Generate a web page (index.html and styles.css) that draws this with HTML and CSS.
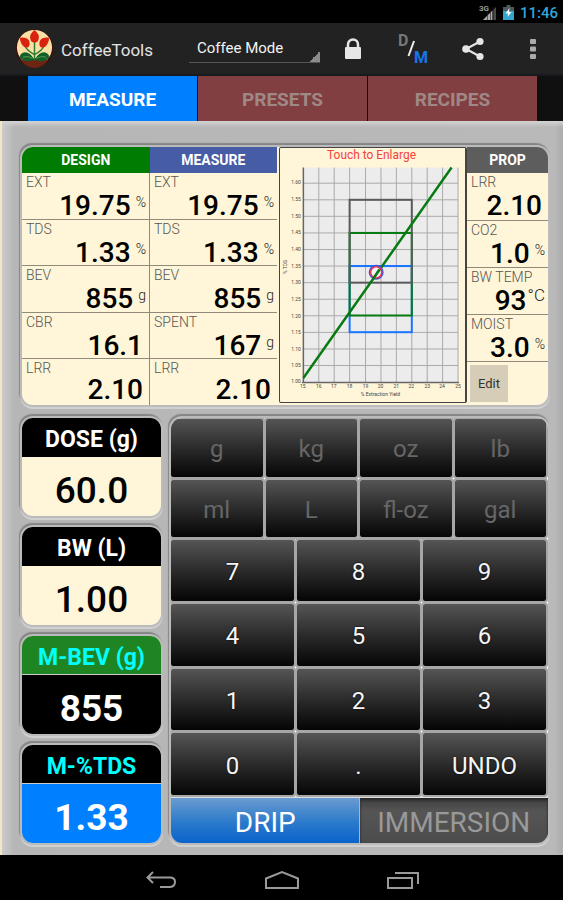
FILE: index.html
```html
<!DOCTYPE html>
<html lang="en">
<head>
<meta charset="utf-8">
<meta name="viewport" content="width=device-width, initial-scale=1">
<title>CoffeeTools</title>
<link rel="stylesheet" href="styles.css">
</head>
<body>
<div class="app">
  <div class="status">
    <svg width="18" height="17" viewBox="0 0 18 17" aria-hidden="true">
      <path d="M4 16L17 3V16Z" fill="#4a4a4a"/>
      <path d="M4 16L13 7V16Z" fill="#aaa"/>
      <path d="M8.500 5V16M11.500 5V16M14.500 3V16" stroke="#222" stroke-width="0.600"/>
      <text class="net" x="0" y="7">3G</text>
    </svg>
    <svg width="11" height="15" viewBox="0 0 11 15" aria-hidden="true">
      <path d="M3.500 0h4v2H11v6H0V2h3.500z" fill="#4d5a5e"/>
      <path d="M0 6h11v9H0z" fill="#33a5cf"/>
      <path d="M6.500 3L2.500 8.500H5L4.500 12L8.500 7H6z" fill="#fff"/>
    </svg>
    <span>11:46</span>
  </div>

  <header class="bar">
    <svg class="logo" viewBox="0 0 40 42" aria-hidden="true">
      <circle cx="20" cy="21" r="19.500" fill="#3a120b"/>
      <circle cx="20" cy="20" r="18" fill="#fbe0a6"/>
      <path d="M6 33Q20 29 34 33Q28 41 20 41Q12 41 6 33Z" fill="#6e2413"/>
      <path d="M20 14V33M10 18Q12 23 19.500 27M30 18Q28 23 20.500 27" stroke="#2e7a35" stroke-width="1.500" fill="none"/>
      <path d="M20 2Q25 6 24.500 10Q24 15 20 15Q16 15 15.500 10Q15 6 20 2Z" fill="#d9230f"/>
      <path d="M5 10Q12 9 14.500 13Q16 18 13 20Q9 20.500 7 17Q5 14 5 10Z" fill="#d9230f"/>
      <path d="M35 10Q28 9 25.500 13Q24 18 27 20Q31 20.500 33 17Q35 14 35 10Z" fill="#d9230f"/>
      <path d="M19.500 32Q15 24 9 25Q5 26 5 30Q8 34 13 34Q18 34 19.500 32ZM20.500 32Q25 24 31 25Q35 26 35 30Q32 34 27 34Q22 34 20.500 32Z" fill="#11602a"/>
      <path d="M8 30Q13 28 18 31M32 30Q27 28 22 31" stroke="#58a04f" stroke-width="1" fill="none"/>
    </svg>
    <h1>CoffeeTools</h1>
    <div class="spinner">
      <select aria-label="Mode"><option>Coffee Mode</option><option>Espresso</option></select>
    </div>
    <button class="icon" type="button" aria-label="Lock">
      <svg width="18" height="22" viewBox="0 0 18 22"><path d="M4 10V6.500a5 5 0 0 1 10 0V10" fill="none" stroke="#e6e6e6" stroke-width="2.500"/><rect x="1" y="9" width="16" height="12" rx="1" fill="#e6e6e6"/></svg>
    </button>
    <button class="icon" type="button" aria-label="Design or measure">
      <svg width="32" height="32" viewBox="0 0 32 32"><text class="glyph-d" x="1" y="13">D</text><path d="M11.500 23L17 8" stroke="#eee" stroke-width="2"/><text class="glyph-m" x="17" y="30">M</text></svg>
    </button>
    <button class="icon" type="button" aria-label="Share">
      <svg width="22" height="24" viewBox="0 0 22 24"><path d="M18 4.500L4 12L18 19.500" fill="none" stroke="#e6e6e6" stroke-width="2"/><g fill="#e6e6e6"><circle cx="4" cy="12" r="3.800"/><circle cx="18" cy="4.500" r="3.600"/><circle cx="18" cy="19.500" r="3.600"/></g></svg>
    </button>
    <button class="icon" type="button" aria-label="More options">
      <svg width="6" height="20" viewBox="0 0 6 20" fill="#aaa"><rect width="6" height="5" rx="1"/><rect y="7.500" width="6" height="5" rx="1"/><rect y="15" width="6" height="5" rx="1"/></svg>
    </button>
  </header>

  <nav class="tabs">
    <button class="tab active" type="button">MEASURE</button>
    <button class="tab" type="button">PRESETS</button>
    <button class="tab" type="button">RECIPES</button>
  </nav>

  <main>
    <section class="panel readings">
      <table class="grid">
        <thead><tr><th class="green" scope="col">DESIGN</th><th class="indigo" scope="col">MEASURE</th></tr></thead>
        <tbody>
          <tr><td><p>EXT</p><div class="val"><b>19.75</b><i>%</i></div></td><td><p>EXT</p><div class="val"><b>19.75</b><i>%</i></div></td></tr>
          <tr><td><p>TDS</p><div class="val"><b>1.33</b><i>%</i></div></td><td><p>TDS</p><div class="val"><b>1.33</b><i>%</i></div></td></tr>
          <tr><td><p>BEV</p><div class="val"><b>855</b><i>g</i></div></td><td><p>BEV</p><div class="val"><b>855</b><i>g</i></div></td></tr>
          <tr><td><p>CBR</p><div class="val"><b>16.1</b></div></td><td><p>SPENT</p><div class="val"><b>167</b><i>g</i></div></td></tr>
          <tr><td><p>LRR</p><div class="val"><b>2.10</b></div></td><td><p>LRR</p><div class="val"><b>2.10</b></div></td></tr>
        </tbody>
      </table>

      <button class="chart" type="button" aria-label="Enlarge chart">
        <svg viewBox="280 149 186 254">
          <text class="chart-title" x="372" y="159" text-anchor="middle">Touch to Enlarge</text>
          <rect x="303" y="168" width="156" height="216" fill="#ececec"/>
          <path d="M319 168V384M334.500 168V384M350 168V384M366 168V384M381.500 168V384M397 168V384M412.500 168V384M428 168V384M443.500 168V384M459 168V384M303 183.700H459M303 200.400H459M303 217H459M303 233.700H459M303 250.400H459M303 267H459M303 283.700H459M303 300.400H459M303 317H459M303 333.700H459M303 350.400H459M303 367H459" stroke="#a9a9a9" stroke-width="1"/>
          <path d="M303.500 168V384M302 384H460" stroke="#666" stroke-width="1.500"/>
          <g fill="none" stroke-width="2">
            <rect x="350" y="267" width="62.500" height="66.500" stroke="#1a75ff"/>
            <rect x="350" y="233.700" width="62.500" height="83" stroke="#087a12"/>
            <rect x="350" y="200.400" width="62.500" height="83.300" stroke="#5a5a5e"/>
            <path d="M351 267H411.500" stroke="#1a75ff"/>
            <path d="M351 233.700H411.500" stroke="#087a12"/>
          </g>
          <path d="M303.500 379.500L452.500 168" stroke="#087a12" stroke-width="2.500"/>
          <circle cx="376.700" cy="273.300" r="6.800" fill="none" stroke="#3b59d6" stroke-width="1.500"/>
          <circle cx="376.700" cy="273.300" r="5.600" fill="#fff" fill-opacity="0.500" stroke="#e8305a" stroke-width="1.500"/>
          <path d="M373.500 280L380 270.500" stroke="#087a12" stroke-width="2.500"/>
          <g class="ticks" text-anchor="end">
            <text x="301" y="185">1.60</text><text x="301" y="202">1.55</text><text x="301" y="219">1.50</text><text x="301" y="235">1.45</text><text x="301" y="252">1.40</text><text x="301" y="269">1.35</text><text x="301" y="285">1.30</text><text x="301" y="302">1.25</text><text x="301" y="319">1.20</text><text x="301" y="335">1.15</text><text x="301" y="352">1.10</text><text x="301" y="369">1.05</text><text x="301" y="385">1.00</text>
          </g>
          <g class="ticks" text-anchor="middle">
            <text x="303" y="390">15</text><text x="319" y="390">16</text><text x="334" y="390">17</text><text x="350" y="390">18</text><text x="366" y="390">19</text><text x="381" y="390">20</text><text x="397" y="390">21</text><text x="412" y="390">22</text><text x="428" y="390">23</text><text x="443" y="390">24</text><text x="459" y="390">25</text>
            <text x="381" y="398">% Extraction Yield</text>
            <text transform="translate(287 268) rotate(-90)">% TDS</text>
          </g>
        </svg>
      </button>

      <div class="prop">
        <table class="grid">
          <thead><tr><th class="gray" scope="col">PROP</th></tr></thead>
          <tbody>
            <tr><td><p>LRR</p><div class="val"><b>2.10</b></div></td></tr>
            <tr><td><p>CO2</p><div class="val"><b>1.0</b><i>%</i></div></td></tr>
            <tr><td><p>BW TEMP</p><div class="val"><b>93</b><i class="big">°C</i></div></td></tr>
            <tr><td><p>MOIST</p><div class="val"><b>3.0</b><i>%</i></div></td></tr>
          </tbody>
        </table>
        <button class="edit" type="button">Edit</button>
      </div>
    </section>

    <div class="lower">
      <div class="cards">
        <button class="panel card dose" type="button"><span>DOSE (g)</span><strong>60.0</strong></button>
        <button class="panel card dose" type="button"><span>BW (L)</span><strong>1.00</strong></button>
        <button class="panel card bev" type="button"><span>M-BEV (g)</span><strong>855</strong></button>
        <button class="panel card tds" type="button"><span>M-%TDS</span><strong>1.33</strong></button>
      </div>
      <div class="panel pad">
        <div class="keys">
          <button class="unit" type="button" disabled>g</button><button class="unit" type="button" disabled>kg</button><button class="unit" type="button" disabled>oz</button><button class="unit" type="button" disabled>lb</button>
          <button class="unit" type="button" disabled>ml</button><button class="unit" type="button" disabled>L</button><button class="unit" type="button" disabled>fl-oz</button><button class="unit" type="button" disabled>gal</button>
          <button type="button">7</button><button type="button">8</button><button type="button">9</button>
          <button type="button">4</button><button type="button">5</button><button type="button">6</button>
          <button type="button">1</button><button type="button">2</button><button type="button">3</button>
          <button type="button">0</button><button type="button">.</button><button type="button">UNDO</button>
        </div>
        <div class="brew">
          <button class="on" type="button" aria-pressed="true">DRIP</button><button type="button" aria-pressed="false">IMMERSION</button>
        </div>
      </div>
    </div>
  </main>

  <footer class="sysnav">
    <button type="button" aria-label="Back"><svg width="32" height="20" viewBox="0 0 32 20"><path d="M8 2L2.500 7.500L8 13M3 7.500H25Q30 7.500 30 12T25 17H15" fill="none" stroke="#9a9a9a" stroke-width="2"/></svg></button>
    <button type="button" aria-label="Home"><svg width="36" height="20" viewBox="0 0 36 20"><path d="M2 18V8.500L18 2L34 8.500V18Z" fill="none" stroke="#9a9a9a" stroke-width="2"/></svg></button>
    <button type="button" aria-label="Recent apps"><svg width="34" height="20" viewBox="0 0 34 20"><path d="M2 8H26V18H2ZM9 3H32V14" fill="none" stroke="#9a9a9a" stroke-width="2"/></svg></button>
  </footer>
</div>
</body>
</html>
```
FILE: styles.css
```css
* { box-sizing: border-box; }

body {
  margin: 0;
  background: #000;
  font-family: Roboto, "Liberation Sans", sans-serif;
}

button, select { font: inherit; border: 0; padding: 0; margin: 0; }
p, h1 { margin: 0; }

.app { min-height: 100vh; display: flex; flex-direction: column; }

.status {
  height: 23px;
  display: flex;
  align-items: center;
  justify-content: flex-end;
  gap: 6px;
  padding: 2px 5px 0 0;
  color: #33a5d8;
  font-size: 15px;
  font-weight: 500;
}
.net { font-size: 8px; font-weight: 700; fill: #999; }

.bar {
  height: 53px;
  display: flex;
  align-items: center;
  background: #222;
  border-bottom: 2px solid #171a1e;
  padding-left: 15px;
}
.logo { width: 39px; height: 41px; flex: none; }
.bar h1 {
  color: #e2e2e2;
  font-size: 17px;
  font-weight: 400;
  margin-left: 7px;
  padding-top: 2px;
  flex: 1;
}
.spinner {
  width: 131px;
  margin-right: 3px;
  border-bottom: 1px solid #555;
  background: linear-gradient(135deg, transparent 50%, #8b8b8b 50%) right bottom / 11px 11px no-repeat;
}
.spinner select {
  appearance: none;
  display: block;
  width: 100%;
  height: 27px;
  padding: 2px 8px;
  background: none;
  color: #f2f2f2;
  font-size: 15px;
}
.icon {
  width: 60px;
  height: 50px;
  display: grid;
  place-items: center;
  background: none;
}
.glyph-d, .glyph-m { font-size: 16px; font-weight: 700; fill: #777; }
.glyph-m { font-size: 16px; fill: #1677e8; }

.tabs {
  height: 45px;
  display: flex;
  gap: 1px;
  padding: 0 26px 0 28px;
  background: #101010;
}
.tab {
  flex: 1;
  padding-top: 2px;
  background: #813f42;
  color: #a08885;
  font-size: 19px;
  font-weight: 700;
}
.tab.active { background: #0080ff; color: #fff; }

main {
  flex: 1;
  display: flex;
  flex-direction: column;
  gap: 13px;
  padding: 26px 15px 12px 20px;
  border-left: 2px solid #f3e6c0;
  background: linear-gradient(90deg, #cbcbcb, #b6b6b6 12px, #b9b9b9 calc(100% - 8px), #aaa);
  box-shadow: inset 0 5px 4px -2px #d5d5d5;
}

.panel {
  overflow: hidden;
  border-radius: 11px;
  background: #fff5d8;
  box-shadow: 0 0 0 2px #bbb, -1px -2px 1px 2px #858585, 0 2px 0 2px #d0d0d0;
}

.readings {
  display: grid;
  grid-template-columns: 255fr 190fr 81fr;
  height: 258px;
}
.grid {
  width: 100%;
  border-collapse: collapse;
  table-layout: fixed;
}
.readings > .grid { height: 258px; }
.grid th {
  height: 26px;
  padding: 0;
  color: #fff;
  font-size: 14px;
  font-weight: 700;
}
.green { background: #007d00; }
.indigo { background: #465ca4; }
.gray { background: #5d5d5d; }
.grid td {
  height: 46px;
  padding: 2px 3px 0 4px;
  vertical-align: top;
  border-bottom: 1px solid #8f8a7a;
}
.prop .grid td { height: 47px; }
.readings > .grid td + td { border-left: 1px solid #8f8a7a; }
.readings > .grid tr:last-child td { border-bottom: 0; }
.grid p {
  color: #555;
  font-size: 14px;
  font-weight: 300;
  line-height: 15px;
}
.val {
  display: flex;
  justify-content: flex-end;
  gap: 5px;
  height: 28px;
  line-height: 32px;
}
.val b { font-size: 28px; font-weight: 500; line-height: 32px; margin-bottom: -4px; color: #000; }
.readings > .grid tr:last-child .val b { line-height: 28px; margin-bottom: 0; }
.val b:only-child { margin-right: 3px; }
.val i {
  font-size: 14px;
  font-style: normal;
  font-weight: 300;
  line-height: 24px;
  color: #222;
}
.val .big { font-size: 17px; line-height: 20px; margin-left: -4px; }

.chart {
  background: #fff5d8;
  border: 1px solid #444;
  border-right-width: 2px;
  margin: 0 0 2px 2px;
  border-radius: 2px;
}
.chart svg { display: block; width: 100%; height: 100%; }
.chart-title { font-size: 12px; fill: #f4433a; }
.ticks { font-size: 5px; fill: #444; }

.edit {
  display: block;
  width: 38px;
  height: 37px;
  margin: 3px 0 0 3px;
  background: #d5cdb7;
  color: #333;
  font-size: 13px;
}

.lower {
  flex: 1;
  display: grid;
  grid-template-columns: 139fr 377fr;
  gap: 10px;
}
.cards { display: grid; grid-template-rows: repeat(4, 1fr); gap: 11px; }
.card { display: flex; flex-direction: column; text-align: center; }
.card span {
  width: 100%;
  height: 39px;
  line-height: 43px;
  font-size: 23px;
  font-weight: 700;
  color: #fff;
  background: #000;
}
.card strong {
  flex: 1;
  width: 100%;
  display: grid;
  place-items: center;
  padding-top: 8px;
  font-size: 37px;
  font-weight: 500;
  line-height: 40px;
  color: #000;
}
.bev span, .tds span { color: #0ff; border-bottom: 1px solid #ccc; }
.bev span { background: #1f8523; }
.bev strong, .tds strong { color: #fff; background: #000; font-weight: 700; }
.tds strong { background: #0080ff; }

.pad { display: flex; flex-direction: column; gap: 3px; background: #ddd; }
.keys {
  flex: 1;
  display: grid;
  grid-template-columns: repeat(12, 1fr);
  grid-template-rows: 58fr 58fr 61fr 62fr 62fr 62fr;
  gap: 3px;
  padding: 1px 2px 0 0;
  background: #fff;
}
.keys button {
  grid-column: span 4;
  padding-top: 3px;
  border-radius: 2px;
  background: linear-gradient(#555, #2b2b2b 50%, #050505);
  box-shadow: 0 0 0 2px #a6a6a6;
  color: #f5f5f5;
  font-size: 24px;
  text-shadow: 0 0 2px #000;
}
.keys .unit { grid-column: span 3; color: #666; text-shadow: none; }
.brew { height: 45px; display: flex; }
.brew button {
  flex: 1;
  padding-top: 3px;
  background: linear-gradient(#3f3f3f, #555 30%, #4c4c4c);
  box-shadow: inset 0 2px 3px #222;
  color: #999;
  font-size: 28px;
}
.brew .on {
  background: linear-gradient(#6a9bd0, #2a7acb 55%, #0a63cc);
  box-shadow: inset -1px 0 0 #9bb8d8;
  color: #fff;
}

.sysnav {
  height: 45px;
  display: flex;
  justify-content: center;
  align-items: center;
  padding-top: 4px;
}
.sysnav button {
  width: 121px;
  height: 40px;
  display: grid;
  place-items: center;
  background: none;
}
```
